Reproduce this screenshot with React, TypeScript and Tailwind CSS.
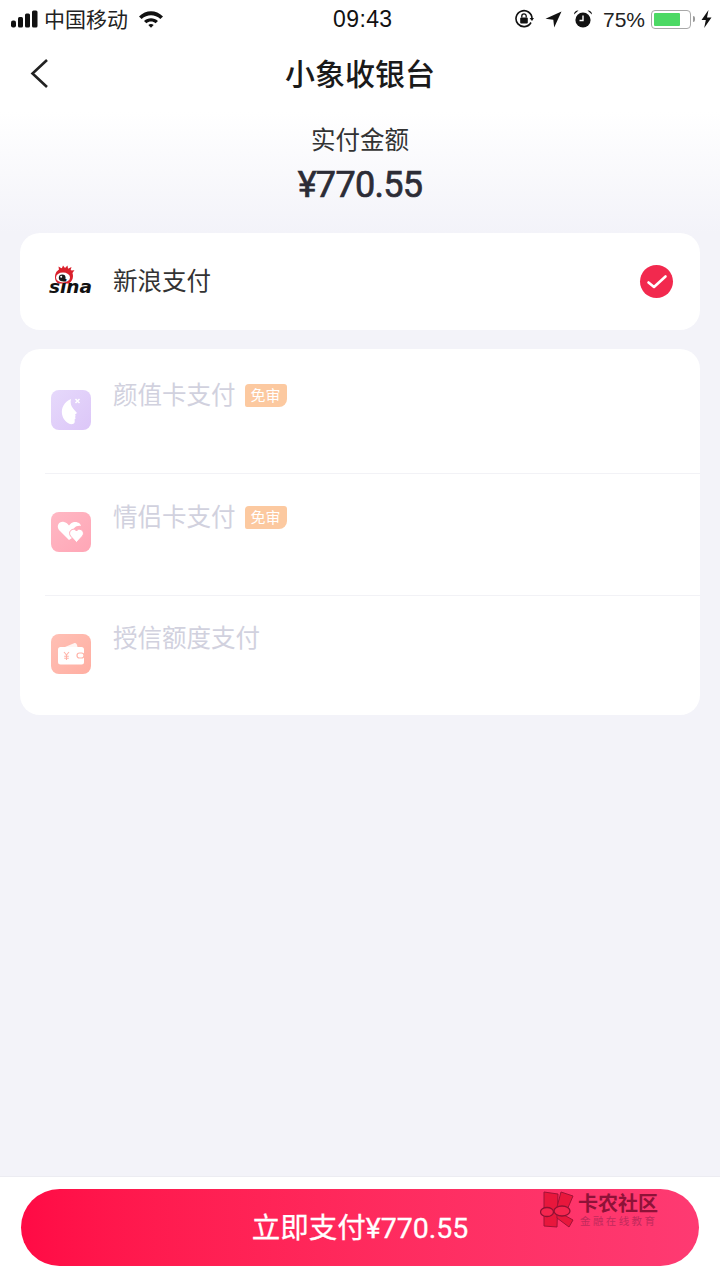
import React from 'react';

const FONT = "font-['Open_Sans','Noto_Sans_CJK_SC',sans-serif]";

const StatusBar = () => (
  <div className="h-[38px] flex items-center pl-[11px] pr-[8px] text-[#111]">
    <div className="w-[322px] flex items-center">
      {/* signal bars */}
      <svg width="28" height="18" viewBox="0 0 28 18" className="mr-[5px]">
        <rect x="0" y="10.5" width="5" height="7" rx="2" fill="#111" />
        <rect x="7" y="7" width="5" height="10.5" rx="1.5" fill="#111" />
        <rect x="14" y="3.5" width="5" height="14" rx="1.5" fill="#111" />
        <rect x="21" y="0.5" width="5.5" height="17" rx="1.5" fill="#111" />
      </svg>
      <span className="text-[21px] leading-none text-[#222]">中国移动</span>
      <svg width="26" height="18" viewBox="0 0 26 18" className="ml-[10px]">
        <path d="M1 6.5 C8 -0.5 18 -0.5 25 6.5 L22.4 9 C16.8 4 9.2 4 3.6 9Z" fill="#111" />
        <path d="M6 11 C10 7.4 16 7.4 20 11 L17.6 13.3 C15 11 11 11 8.4 13.3Z" fill="#111" />
        <path d="M10.3 15 C12 13.6 14 13.6 15.7 15 L13 17.8Z" fill="#111" />
      </svg>
    </div>
    <span className="text-[23px] leading-6 font-['Liberation_Sans',sans-serif] text-[#111] tracking-[0.4px]">09:43</span>
    <div className="ml-auto flex items-center">
      {/* orientation lock */}
      <svg width="20" height="20" viewBox="0 0 20 20" fill="none">
        <path d="M17 13.5 A8 8 0 1 1 18 9.5" stroke="#111" strokeWidth="1.6" />
        <path d="M15.6 9 L20 9 L18 12Z" fill="#111" />
        <rect x="6.2" y="8.5" width="7.6" height="6" rx="1" fill="#111" />
        <path d="M7.8 8.5 V7 a2.2 2.2 0 0 1 4.4 0 V8.5" stroke="#111" strokeWidth="1.3" />
      </svg>
      {/* location */}
      <svg width="17" height="17" viewBox="0 0 17 17" className="ml-[11px]">
        <path d="M16.5 0.5 L0.5 7.8 L8.3 8.7 L9.2 16.5Z" fill="#111" />
      </svg>
      {/* alarm */}
      <svg width="20" height="20" viewBox="0 0 20 20" className="ml-[11px]">
        <circle cx="10" cy="11" r="7.6" fill="#111" />
        <path d="M1 5.5 A4 4 0 0 1 5.5 1.5Z M19 5.5 A4 4 0 0 0 14.5 1.5Z" fill="#111" />
        <path d="M10 6.5 V11.5 H6.5" stroke="#fff" strokeWidth="1.4" fill="none" />
      </svg>
      <span className="ml-[10px] text-[21px] leading-none font-['Liberation_Sans',sans-serif] text-[#222]">75%</span>
      {/* battery */}
      <div className="ml-[6px] w-[40px] h-[19px] rounded-[4px] border border-[#a8a8a8] p-[2px] flex">
        <div className="w-[26px] bg-[#4cd964] rounded-[1px]" />
      </div>
      <div className="w-[2px] h-[6px] bg-[#9a9a9a] ml-[2px] rounded-r-sm" />
      <svg width="11" height="18" viewBox="0 0 11 18" className="ml-[6px]">
        <path d="M7.5 0 L0.5 10 H4.8 L3.2 18 L10.5 7.5 H6Z" fill="#111" />
      </svg>
    </div>
  </div>
);

const SinaLogo = () => (
  <div className="w-[44px] h-[34px] relative">
    <svg width="44" height="34" viewBox="0 0 44 34" className="absolute inset-0">
      {/* red ring and rays round the eye */}
      <path d="M7 13 C6.5 7.5 10 3.5 16 3 C21.5 2.8 25 6.5 25 11 C25 14 23.5 17 21 18.5 L10 18.5 C8 17 7.2 15 7 13Z" fill="#d9202b" />
      <path d="M11 5 L10.5 1.5 L13.8 3.5 L15 0.5 L17 3 L19.5 0.5 L20 3.8 L23.5 2 L22.5 5.5 L26.5 5.2 L24 8.5Z" fill="#d9202b" />
      <ellipse cx="15" cy="12.5" rx="7" ry="5" fill="#fff" />
      <circle cx="14.2" cy="12.8" r="3.4" fill="#1a1a1a" />
      <circle cx="13.2" cy="11.8" r="1" fill="#fff" />
    </svg>
    <span className="absolute left-[1px] top-[11px] text-[18.5px] leading-[22px] font-bold italic font-['DejaVu_Sans',sans-serif] text-[#111]">
      sina
    </span>
  </div>
);

const FaceIcon = () => (
  <div className="w-10 h-10 rounded-[8px] bg-gradient-to-br from-[#e6d9fb] to-[#dcc6f8] flex items-center justify-center">
    <svg width="24" height="30" viewBox="0 0 24 30">
      <path d="M12 4 C5 7 2 13 3 19 C4 25 9 30 14 29 C16 28.5 16 26 15.5 24.5 C17 24 16.5 22.5 16 22 C17 21 16.5 20 16 19.5 L18 18 L14.5 14 C12 11 11 8 12 4Z" fill="#fff" />
      <path d="M16.5 4 L20.5 8 M20.5 4 L16.5 8" stroke="#fff" strokeWidth="1.5" />
    </svg>
  </div>
);

const HeartsIcon = () => (
  <div className="w-10 h-10 rounded-[8px] bg-gradient-to-br from-[#ffb8c4] to-[#ffa6b6] flex items-center justify-center">
    <svg width="30" height="26" viewBox="0 0 30 26">
      <path d="M13 21 L3 11 C0 7 3 2 8 3 C10 3.4 12 5 13 6.5 C14 5 16 3.4 18 3 C22 2.4 25 5 25 7 C20 6 16 10 17 14 L19 17Z" fill="#fff" />
      <path d="M20.5 23.5 L14.5 17 C12 13.5 15 9.5 18.5 10.3 C19.5 10.6 20 11.2 20.5 12 C21 11.2 21.5 10.6 22.5 10.3 C26 9.5 29 13.5 26.5 17Z" fill="#fff" stroke="#ffabba" strokeWidth="1" />
    </svg>
  </div>
);

const WalletIcon = () => (
  <div className="w-10 h-10 rounded-[8px] bg-gradient-to-br from-[#ffc0b5] to-[#ffaea2] flex items-center justify-center">
    <svg width="28" height="24" viewBox="0 0 28 24">
      <path d="M8 5 L17 1.2 C19 0.6 20 2 20.5 5Z" fill="#fff" opacity="0.85" />
      <rect x="1" y="5" width="26" height="17.5" rx="2.5" fill="#fff" />
      <rect x="20" y="11" width="7" height="5" rx="2.5" fill="none" stroke="#ffb3a8" strokeWidth="1.2" />
      <path d="M7 10 L9.5 13 L12 10 M9.5 13 V18 M7.2 14.2 H11.8 M7.2 16.2 H11.8" stroke="#ffb3a8" strokeWidth="1.1" fill="none" />
    </svg>
  </div>
);

const rows = [
  { name: '颜值卡支付', icon: <FaceIcon />, badge: true, rowCls: 'h-[125px] border-b border-[#f2f2f6]', iconCls: 'mt-[41px]', textCls: 'mt-[27px]' },
  { name: '情侣卡支付', icon: <HeartsIcon />, badge: true, rowCls: 'h-[122px] border-b border-[#f2f2f6]', iconCls: 'mt-[38px]', textCls: 'mt-[24px]' },
  { name: '授信额度支付', icon: <WalletIcon />, badge: false, rowCls: 'h-[119px]', iconCls: 'mt-[38px]', textCls: 'mt-[23px]' },
];

export default function App() {
  return (
    <div className={`w-[720px] h-[1280px] flex flex-col bg-[#f3f3f9] ${FONT}`}>
      <div className="bg-gradient-to-b from-white from-[48%] to-[#f3f3f9] h-[233px] shrink-0">
        <StatusBar />
        <div className="h-[72px] relative flex items-center justify-center">
          <svg width="20" height="32" viewBox="0 0 20 32" fill="none" className="absolute left-[30px] top-[20px]">
            <path d="M17 2 L2.5 15.5 L17 29" stroke="#222" strokeWidth="2.6" />
          </svg>
          <h1 className="text-[30px] font-medium text-[#1a1a1a] leading-10">小象收银台</h1>
        </div>
        <div className="flex flex-col items-center mt-[13px]">
          <span className="text-[24.5px] leading-[34px] text-[#333]">实付金额</span>
          <span className="text-[36px] leading-[50px] mt-[3px] font-normal text-[#2c2c36] font-['Roboto',sans-serif] tracking-[-0.7px] [-webkit-text-stroke:0.7px_#2c2c36]">¥770.55</span>
        </div>
      </div>

      <div className="mx-5 h-[97px] rounded-[20px] bg-white shrink-0 flex items-center pl-[28px] pr-[27px]">
        <SinaLogo />
        <span className="ml-[21px] text-[24.5px] text-[#333]">新浪支付</span>
        <span className="ml-auto w-[33px] h-[33px] rounded-full bg-[#f2294e] flex items-center justify-center">
          <svg width="22" height="16" viewBox="0 0 22 16" fill="none">
            <path d="M2.5 8.5 L8 13 L19.5 2.5" stroke="#fff" strokeWidth="2.6" strokeLinecap="round" strokeLinejoin="round" />
          </svg>
        </span>
      </div>

      <div className="mx-5 mt-[19px] rounded-[20px] bg-white shrink-0 pl-[25px] flex flex-col">
        {rows.map((row) => (
          <div key={row.name} className={`flex items-start ${row.rowCls}`}>
            <div className={`ml-[6px] ${row.iconCls}`}>{row.icon}</div>
            <div className={`ml-[22px] flex items-start ${row.textCls}`}>
              <span className="text-[24.5px] leading-[38px] text-[#d1d1de]">{row.name}</span>
              {row.badge && (
                <span className="ml-[9px] mt-[8px] w-[42px] h-[23px] bg-[#fcc9a0] rounded-tl-[4px] rounded-tr-[3px] rounded-br-[8px] rounded-bl-[2px] text-white text-[15px] leading-[23px] text-center">
                  免审
                </span>
              )}
            </div>
          </div>
        ))}
      </div>

      <div className="mt-auto h-[104px] bg-white border-t border-[#ececf2] px-[21px] pt-[12px] shrink-0 relative">
        <button className="w-[678px] h-[77px] pt-[3px] rounded-full bg-gradient-to-r from-[#ff0a45] to-[#fe3a72] text-white text-[28.5px] [-webkit-text-stroke:0.3px_#fff] font-['Roboto','Noto_Sans_CJK_SC',sans-serif] flex items-center justify-center">
          立即支付¥770.55
        </button>
        {/* watermark */}
        <div className="absolute left-[540px] top-[14px] flex items-start">
          <svg width="36" height="38" viewBox="0 0 36 38">
            <path d="M4 1 L18 3 L17 36 L4 35Z" fill="#e8173c" stroke="#a01236" strokeWidth="1" />
            <path d="M21 1 L33 5 L27 19 L17 16Z" fill="#e8173c" stroke="#a01236" strokeWidth="1" />
            <path d="M17 20 L33 29 L29 36 L17 27Z" fill="#e8173c" stroke="#a01236" strokeWidth="1" />
            <ellipse cx="7" cy="21" rx="6.5" ry="4.5" fill="#f5264f" stroke="#8d1233" strokeWidth="1.3" />
            <ellipse cx="22" cy="20" rx="8" ry="5" fill="#f5264f" stroke="#8d1233" strokeWidth="1.3" />
          </svg>
          <div className="ml-[2px] mt-[3px] flex flex-col">
            <span className="text-[20px] leading-[20px] font-bold text-[#8e1238]">卡农社区</span>
            <span className="ml-[2px] mt-[1px] text-[10.5px] leading-[12px] text-[#c22a5c] tracking-[2.4px]">金融在线教育</span>
          </div>
        </div>
      </div>
    </div>
  );
}
